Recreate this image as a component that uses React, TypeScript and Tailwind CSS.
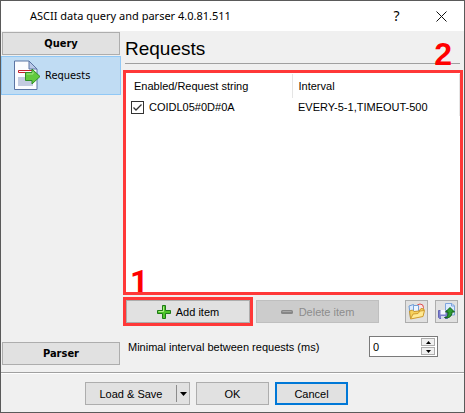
import { useState } from 'react';
import type { ReactNode } from 'react';

interface RequestItem {
  request: string;
  interval: string;
  enabled: boolean;
}

const initialItems: RequestItem[] = [
  { request: 'COIDL05#0D#0A', interval: 'EVERY-5-1,TIMEOUT-500', enabled: true },
];

const buttonClass = 'flex h-[23px] items-center justify-center border border-[#adadad] bg-[#e1e1e1]';

function PageArrowIcon() {
  return (
    <svg width="28" height="31" viewBox="0 0 28 31" aria-hidden="true">
      <path d="M1.500 1H16l8 8v20.500H1.500z" fill="#fbfcff" stroke="#5b74a3" />
      <path d="M5 17h15v9H5z" fill="#c3cbe0" />
      <path d="M16 1v8h8z" fill="#b9c8e6" stroke="#5b74a3" />
      <path d="M5.500 10.500h14v2h-14z" fill="#fff" stroke="#c3202c" />
      <path d="M12.500 12.500H19V9l8 7.500-8 7.500v-3.500h-6.500z" fill="#62ca3e" stroke="#2f8f25" strokeLinejoin="round" />
      <path d="M13.500 14H20v-2.500" fill="none" stroke="#a5e886" />
    </svg>
  );
}

function PlusIcon() {
  return (
    <svg width="14" height="14" viewBox="0 0 14 14" aria-hidden="true">
      <path d="M5.500.5h3v5h5v3h-5v5h-3v-5h-5v-3h5z" fill="#4fc52b" stroke="#1f7a16" strokeLinejoin="round" />
      <path d="M6.500 1.500v5h-5" fill="none" stroke="#b0ee88" />
    </svg>
  );
}

function MinusIcon() {
  return (
    <svg width="12" height="4" viewBox="0 0 12 4" aria-hidden="true">
      <rect width="12" height="4" rx="1.500" fill="#868686" />
      <path d="M1.500 1.500h9" stroke="#a6a6a6" />
    </svg>
  );
}

function FolderIcon() {
  return (
    <svg width="17" height="17" viewBox="0 0 17 17" aria-hidden="true">
      <path d="M1 3L5.500 1.500l2 9-5 4z" fill="#dceaff" stroke="#6d9bd5" />
      <circle cx="12" cy="4.500" r="3.500" fill="#fbe4e4" stroke="#dc4d4d" />
      <path d="M5.500 2.500h5v7h-5z" fill="#edf5ff" stroke="#73a0d8" />
      <path d="M2.500 15.500L1.500 8l3-1 1.500 1.500 5-.5L13 5.500l3 .5-1 6z" fill="#f7d25c" stroke="#c9962b" strokeLinejoin="round" />
      <path d="M2.500 16l2.500-5 5-.5 2-2.500 4.500-.5-1.500 6z" fill="#ffe993" stroke="#cf9c2f" strokeLinejoin="round" />
    </svg>
  );
}

function ExportIcon() {
  return (
    <svg width="17" height="17" viewBox="0 0 17 17" aria-hidden="true">
      <path d="M7.500.5H14L16.500 3v9h-9z" fill="#dcebff" stroke="#7fa4dc" />
      <path d="M13.500.5V3h3" fill="none" stroke="#7fa4dc" />
      <path d="M.5 7.500h9v8h-8l-1-1z" fill="#7c7fce" stroke="#6466b4" />
      <path d="M2.500 7h5v4.500h-5z" fill="#f5f7ff" />
      <path d="M3 13h4v3H3z" fill="#d5d8ee" />
      <path d="M6.500 14.500c3 0 3.500-1.500 3.500-5.500H7.500l4.500-4.500L16.500 9H14c0 4.500-3 6.500-7.500 5.500z" fill="#2d9c31" stroke="#126019" strokeLinejoin="round" />
    </svg>
  );
}

function SectionButton({ children }: { children: ReactNode }) {
  return (
    <button type="button" className={`${buttonClass} mx-px font-['DejaVu_Sans_Condensed','DejaVu_Sans',sans-serif] font-bold`}>
      {children}
    </button>
  );
}

export default function App() {
  const [items, setItems] = useState(initialItems);
  const [interval, setInterval] = useState(0);

  const toggleItem = (index: number) => {
    setItems(items.map((item, i) => (i === index ? { ...item, enabled: !item.enabled } : item)));
  };

  return (
    <div className="flex min-h-screen flex-col border border-[#5a5a5a] bg-[#f0f0f0] font-['Liberation_Sans',Arial,sans-serif] text-[11px] leading-4 text-black">
      {/* Title bar */}
      <header className="flex h-[30px] items-center bg-white pl-[29px] font-['Noto_Sans',sans-serif]">
        <h1 className="flex-1">ASCII data query and parser 4.0.81.511</h1>
        <button type="button" aria-label="Help" className="w-[45px] text-center text-[14px]">?</button>
        <button type="button" aria-label="Close" className="flex w-[45px] justify-center">
          <svg width="11" height="11" viewBox="0 0 11 11" aria-hidden="true">
            <path d="M.5.5l10 10M10.500.5l-10 10" stroke="#111" />
          </svg>
        </button>
      </header>

      <div className="flex flex-1">
        <nav className="flex w-[120px] shrink-0 flex-col pt-px pb-[7px]">
          <SectionButton>Query</SectionButton>
          <a
            href="#requests"
            className="mt-px flex h-[39px] items-center border border-[#90c8f6] bg-[#c0dcf3] pl-[11px] font-['DejaVu_Sans_Condensed','DejaVu_Sans',sans-serif]"
          >
            <PageArrowIcon />
            <span className="ml-1">Requests</span>
          </a>
          <div className="flex-1" />
          <SectionButton>Parser</SectionButton>
        </nav>

        <main className="flex min-w-0 flex-1 flex-col pr-px pl-[2px]">
          <h2 className="mr-[3px] ml-[2px] flex h-[33px] items-center border-b border-[#a0a0a0] pt-[4px] text-[19px]">
            Requests
          </h2>

          {/* Request list */}
          <div className="relative mt-[6px] flex-1 border-3 border-[#ff3838] bg-white pt-px">
            <table className="w-full table-fixed border-r border-[#e5e5e5] text-left">
              <thead>
                <tr className="h-[24px]">
                  <th className="w-[166px] border-r border-[#e5e5e5] pl-2 font-normal">Enabled/Request string</th>
                  <th className="pl-[6px] font-normal">Interval</th>
                </tr>
              </thead>
              <tbody>
                {items.map((item, i) => (
                  <tr key={item.request} className="h-[18px] bg-white">
                    <td className="pl-[5px]">
                      <label className="flex items-center gap-[5px]">
                        <input
                          type="checkbox"
                          checked={item.enabled}
                          onChange={() => toggleItem(i)}
                          className="peer sr-only"
                        />
                        <span className="flex h-[13px] w-[13px] items-center justify-center border border-[#333] bg-white peer-focus-visible:outline">
                          {item.enabled && (
                            <svg width="9" height="7" viewBox="0 0 9 7" aria-hidden="true">
                              <path d="M.5 3.500L3 6l5.500-5.500" fill="none" stroke="#333" strokeWidth="1.300" />
                            </svg>
                          )}
                        </span>
                        {item.request}
                      </label>
                    </td>
                    <td className="pl-[6px]">{item.interval}</td>
                  </tr>
                ))}
              </tbody>
            </table>
            <span className="absolute -top-[35px] right-[8px] text-[32px] leading-[32px] font-bold text-[#ff0000]">2</span>
            <span className="absolute bottom-[-5px] left-[4px] font-[Roboto,sans-serif] text-[32px] leading-[32px] font-bold text-[#ff0000]">1</span>
          </div>

          <div className="mt-[2px] flex items-center pr-[5px]">
            <div className="w-[130px] border-3 border-[#ff3838]">
              <button type="button" className={`${buttonClass} w-full gap-[5px]`}>
                <PlusIcon />
                Add item
              </button>
            </div>
            <button
              type="button"
              disabled
              className="ml-[3px] flex h-[23px] w-[123px] items-center justify-center gap-[6px] border border-[#bfbfbf] bg-[#cccccc] text-[#8c8c8c]"
            >
              <MinusIcon />
              Delete item
            </button>
            <div className="flex-1" />
            <button type="button" aria-label="Open" className={`${buttonClass} w-[23px]`}>
              <FolderIcon />
            </button>
            <button type="button" aria-label="Save" className={`${buttonClass} ml-[7px] w-[23px]`}>
              <ExportIcon />
            </button>
          </div>

          <div className="mt-[10px] mb-[15px] flex items-center justify-between pr-[25px] pl-[5px]">
            <label htmlFor="min-interval">Minimal interval between requests (ms)</label>
            <div className="flex h-[21px] w-[69px] items-center border border-[#7a7a7a] bg-white pr-[2px]">
              <input
                id="min-interval"
                type="text"
                value={interval}
                onChange={(e) => setInterval(Number(e.target.value) || 0)}
                className="min-w-0 flex-1 pl-[3px] outline-none"
              />
              <div className="flex w-[14px] flex-col gap-px">
                <button
                  type="button"
                  aria-label="Increase"
                  onClick={() => setInterval(interval + 1)}
                  className="flex h-2 items-center justify-center border border-[#adadad] bg-[#f0f0f0]"
                >
                  <svg width="5" height="3" viewBox="0 0 5 3"><path d="M0 3L2.500 0 5 3z" /></svg>
                </button>
                <button
                  type="button"
                  aria-label="Decrease"
                  onClick={() => setInterval(Math.max(0, interval - 1))}
                  className="flex h-2 items-center justify-center border border-[#adadad] bg-[#f0f0f0]"
                >
                  <svg width="5" height="3" viewBox="0 0 5 3"><path d="M0 0h5L2.500 3z" /></svg>
                </button>
              </div>
            </div>
          </div>
        </main>
      </div>

      {/* Dialog buttons */}
      <footer className="flex justify-center gap-[6px] border-t border-[#a0a0a0] pt-[9px] pr-[32px] pb-[7px] shadow-[inset_0_1px_0_#ffffff]">
        <div className={`${buttonClass} w-[105px]`}>
          <button type="button" className="flex-1">Load &amp; Save</button>
          <button type="button" aria-label="More options" className="flex h-[17px] w-[13px] items-center justify-center border-l border-[#8c8c8c]">
            <svg width="7" height="4" viewBox="0 0 7 4" aria-hidden="true"><path d="M0 0h7L3.500 4z" /></svg>
          </button>
        </div>
        <button type="button" className={`${buttonClass} w-[73px]`}>OK</button>
        <button type="button" className="flex h-[23px] w-[73px] items-center justify-center border-2 border-[#0078d7] bg-[#e1e1e1]">
          Cancel
        </button>
      </footer>
    </div>
  );
}
